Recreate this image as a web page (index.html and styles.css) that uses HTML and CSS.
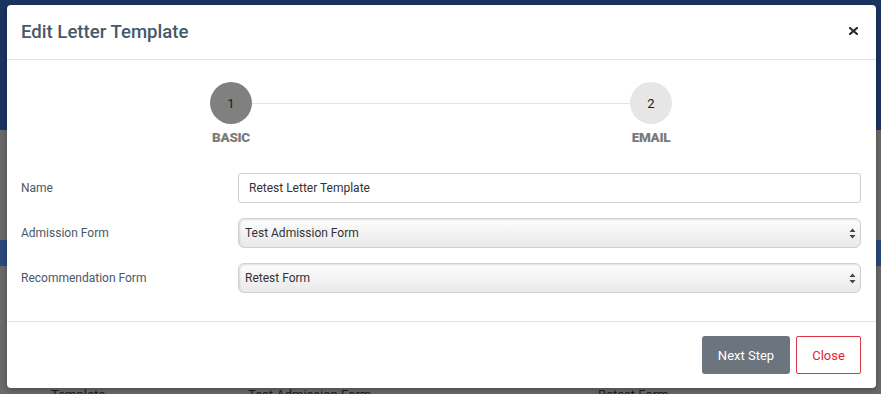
FILE: index.html
```html
<!DOCTYPE html>
<html lang="en">
<head>
  <meta charset="UTF-8">
  <meta name="viewport" content="width=device-width, initial-scale=1.0">
  <title>Edit Letter Template</title>
  <link rel="stylesheet" href="styles.css">
</head>
<body>

  <!-- page behind the modal (already dimmed) -->
  <div class="page">
    <div class="topbar"></div>
    <div class="page-body">
      <div class="side-band"></div>
      <div class="table-row">
        <span class="cell-name">Template</span>
        <span class="cell-form">Test Admission Form</span>
        <span class="cell-rec">Retest Form</span>
      </div>
    </div>
  </div>

  <!-- edit modal -->
  <div class="modal">
    <div class="modal-header">
      <h2 class="modal-title">Edit Letter Template</h2>
      <button class="modal-close" aria-label="Close">
        <svg width="9" height="8" viewBox="0 0 9 8">
          <path d="M1 1 L8 7 M8 1 L1 7" stroke="#2b2b2b" stroke-width="2.2" stroke-linecap="square"/>
        </svg>
      </button>
    </div>

    <div class="modal-body">
      <div class="stepper">
        <div class="step active">
          <div class="step-circle">1</div>
          <div class="step-label">BASIC</div>
        </div>
        <div class="step">
          <div class="step-circle">2</div>
          <div class="step-label">EMAIL</div>
        </div>
      </div>

      <div class="form">
        <label class="form-label" for="name">Name</label>
        <input class="form-input" type="text" id="name" value="Retest Letter Template">

        <label class="form-label" for="admission">Admission Form</label>
        <div class="select-wrap">
          <select class="form-select" id="admission">
            <option>Test Admission Form</option>
          </select>
          <svg class="select-arrows" width="7" height="11" viewBox="0 0 7 11">
            <path d="M3.5 0.5 L6.5 4 L0.5 4 Z M3.5 10.5 L6.5 7 L0.5 7 Z" fill="#444"/>
          </svg>
        </div>

        <label class="form-label" for="recommendation">Recommendation Form</label>
        <div class="select-wrap">
          <select class="form-select" id="recommendation">
            <option>Retest Form</option>
          </select>
          <svg class="select-arrows" width="7" height="11" viewBox="0 0 7 11">
            <path d="M3.5 0.5 L6.5 4 L0.5 4 Z M3.5 10.5 L6.5 7 L0.5 7 Z" fill="#444"/>
          </svg>
        </div>
      </div>
    </div>

    <div class="modal-footer">
      <button class="btn btn-next">Next Step</button>
      <button class="btn btn-close">Close</button>
    </div>
  </div>

</body>
</html>
```

FILE: styles.css
```css
/* base */
body {
  margin: 0;
  padding: 0;
  font-family: Roboto, 'Liberation Sans', sans-serif;
  background-color: #6a6a6a;
  height: 394px;
  overflow: hidden;
}

/* dimmed page behind */
.page {
  display: flex;
  flex-direction: column;
}

.topbar {
  flex-shrink: 0;
  height: 130px;
  background-color: #1c3461;
}

.page-body {
  background-color: #6a6a6a;
  display: flex;
  flex-direction: column;
}

.side-band {
  flex-shrink: 0;
  margin-top: 110px;
  height: 26px;
  background-color: #2a4a7c;
}

.table-row {
  flex-shrink: 0;
  margin-top: 121px;
  display: flex;
  font-size: 13px;
  line-height: 16px;
  color: #1e1e1e;
}

.cell-name {
  width: 197px;
  padding-left: 51px;
}

.cell-form {
  width: 350px;
}

/* modal */
.modal {
  position: absolute;
  top: 5px;
  left: 7px;
  width: 869px;
  height: 383px;
  background-color: #fff;
  border-radius: 4px;
  box-shadow: 0 2px 6px rgba(0, 0, 0, 0.3);
  display: flex;
  flex-direction: column;
}

.modal-header {
  display: flex;
  justify-content: space-between;
  align-items: center;
  padding: 16px 14px 16px 14px;
  border-bottom: 1px solid #e3e3e3;
}

.modal-title {
  margin: 0;
  font-size: 18.6px;
  line-height: 22px;
  font-weight: 500;
  color: #46596a;
}

.modal-close {
  border: none;
  background: none;
  padding: 0;
  margin-right: 4px;
  margin-top: -2px;
  display: flex;
  cursor: pointer;
}

.modal-body {
  padding: 22px 15px 28px 14px;
  border-bottom: 1px solid #e3e3e3;
}

/* stepper */
.stepper {
  display: flex;
  position: relative;
}

.stepper::before {
  content: '';
  position: absolute;
  top: 21px;
  left: 25%;
  right: 25%;
  height: 1px;
  background-color: #e2e2e2;
}

.step {
  flex: 1;
  display: flex;
  flex-direction: column;
  align-items: center;
  position: relative;
}

.step-circle {
  width: 42px;
  height: 42px;
  border-radius: 50%;
  background-color: #e6e6e6;
  color: #1a1a1a;
  font-size: 13px;
  display: flex;
  justify-content: center;
  align-items: center;
}

.step.active .step-circle {
  background-color: #808080;
}

.step-label {
  margin-top: 5px;
  font-size: 13.5px;
  line-height: 16px;
  font-weight: 900;
  color: #7a7a7a;
  letter-spacing: -0.3px;
}

/* form */
.form {
  margin-top: 28px;
  display: grid;
  grid-template-columns: 217px 1fr;
  row-gap: 15px;
  align-items: center;
}

.form-label {
  font-size: 12px;
  color: #4a5866;
  margin-top: -1px;
}

.form-input {
  height: 30px;
  box-sizing: border-box;
  border: 1px solid #cfcfcf;
  border-radius: 3px;
  padding: 0 10px;
  font-family: inherit;
  font-size: 12px;
  color: #333;
}

.select-wrap {
  position: relative;
}

.form-select {
  -webkit-appearance: none;
  appearance: none;
  width: 100%;
  height: 30px;
  box-sizing: border-box;
  border: 1px solid #d0d0d0;
  border-radius: 6px;
  padding: 0 6px;
  font-family: inherit;
  font-size: 12px;
  color: #333;
  background: linear-gradient(#fdfdfd, #e9e9e9);
  box-shadow: inset 1px 1px 2px rgba(0, 0, 0, 0.12);
}

.select-arrows {
  position: absolute;
  right: 5px;
  top: 10px;
  pointer-events: none;
}

/* footer */
.modal-footer {
  display: flex;
  justify-content: flex-end;
  gap: 6px;
  padding: 14px 15px;
}

.btn {
  height: 38px;
  box-sizing: border-box;
  font-family: inherit;
  font-size: 13px;
  cursor: pointer;
}

.btn-next {
  width: 88px;
  padding: 0;
  background-color: #6c757d;
  color: #fff;
  border: none;
  border-radius: 3px;
}

.btn-close {
  width: 65px;
  padding: 0;
  background-color: #fff;
  color: #e8202f;
  border: 1px solid #dc3545;
  border-radius: 2px;
}
```
